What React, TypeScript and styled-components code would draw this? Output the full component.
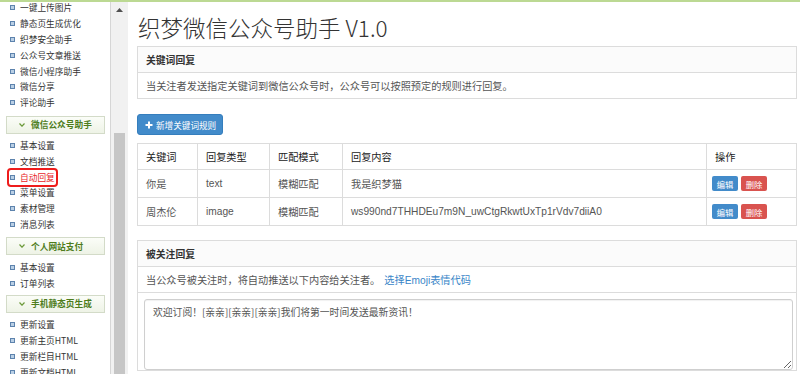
import React from "react";
import styled, { createGlobalStyle, css } from "styled-components";

const Global = createGlobalStyle`
  html, body { margin: 0; padding: 0; background: #fff; overflow: hidden; }
  body { font-family: "Liberation Sans", "Noto Sans CJK SC", sans-serif; color: #333; }
  * { box-sizing: border-box; }
`;

const Page = styled.div`
  width: 800px;
  height: 374px;
  display: flex;
  flex-direction: column;
  overflow: hidden;
`;

const TopBar = styled.div`
  height: 2px;
  flex: none;
  background: #bcd993;
`;

const Body = styled.div`
  flex: 1;
  min-height: 0;
  display: flex;
`;

const Sidebar = styled.nav`
  width: 111px;
  flex: none;
  border-right: 1px solid #d6d6d6;
  overflow: hidden;
  font-family: "Noto Sans CJK SC", sans-serif;
  font-size: 8.7px;
`;

const SideInner = styled.div`
  margin-top: -2px;
`;

const List = styled.ul`
  list-style: none;
  margin: 0;
  padding: 0;
`;

const Item = styled.li`
  height: 15.8px;
  display: flex;
  align-items: center;
  padding-left: 10px;
`;

const ItemLabel = styled.span<{ $active?: boolean }>`
  display: inline-flex;
  align-items: center;
  gap: 5px;
  color: #333;
  ${(p) =>
    p.$active &&
    css`
      color: #e8262a;
      outline: 2px solid #ee1c1c;
      outline-offset: 1px;
      border-radius: 1px;
    `}
`;

const Bullet = styled.i`
  width: 5px;
  height: 5px;
  border: 1px solid #5d83ad;
  background: #b9cfe5;
  display: block;
`;

const SectionHead = styled.div<{ $top: number; $bottom: number }>`
  margin: ${(p) => p.$top}px 5px ${(p) => p.$bottom}px 6px;
  height: 18px;
  border: 1px solid #d3dbc8;
  background: linear-gradient(#fbfdf8, #eef3e6);
  display: flex;
  align-items: center;
  gap: 6px;
  padding-left: 12px;
  color: #4e7d1c;
  font-weight: 700;
  font-size: 8.7px;
`;

const ScrollBar = styled.div`
  width: 17px;
  flex: none;
  background: #f1f1f1;
  display: flex;
  flex-direction: column;
  align-items: center;
`;

const ScrollArrow = styled.div`
  height: 15px;
  display: flex;
  align-items: center;
  justify-content: center;
`;

const ScrollTrack = styled.div`
  flex: 1;
  width: 100%;
  padding: 116px 3px 0 3px;
  display: flex;
`;

const Thumb = styled.div`
  flex: 1;
  background: #c6c6c6;
`;

const Main = styled.main`
  flex: 1;
  min-width: 0;
  padding: 0 3px 0 9px;
  overflow: hidden;
  font-size: 10.2px;
`;

const Title = styled.h1`
  margin: 10px 0 4px 1px;
  font-family: "Noto Sans CJK SC", sans-serif;
  font-weight: 300;
  font-size: 22.5px;
  line-height: 30px;
  color: #333;
`;

const Panel = styled.section`
  border: 1px solid #dcdcdc;
  background: #fff;
`;

const PanelHead = styled.div`
  height: 26px;
  padding: 0 8px;
  display: flex;
  align-items: center;
  background: #fbfbfb;
  border-bottom: 1px solid #dcdcdc;
  font-weight: 700;
  color: #333;
  font-family: "Noto Sans CJK SC", sans-serif;
  font-size: 9.8px;
`;

const PanelRow = styled.div<{ $h: number; $line?: boolean }>`
  height: ${(p) => p.$h}px;
  padding: 0 8px;
  display: flex;
  align-items: center;
  gap: 4px;
  color: #555;
  ${(p) => p.$line && "border-bottom: 1px solid #dcdcdc;"}
`;

const Link = styled.a`
  color: #3a86c8;
  text-decoration: none;
`;

const PrimaryButton = styled.button`
  margin-top: 15px;
  height: 21px;
  width: 86px;
  border: 1px solid #357ebd;
  border-radius: 3px;
  background: #428bca;
  color: #fff;
  font-family: "Noto Sans CJK SC", sans-serif;
  font-size: 8.6px;
  display: flex;
  align-items: center;
  gap: 3px;
  padding: 0 0 0 7px;
`;

const Table = styled.table`
  margin-top: 8px;
  width: 100%;
  border-collapse: collapse;
  table-layout: fixed;
  border: 1px solid #dcdcdc;
`;

const Th = styled.th<{ $w?: number }>`
  ${(p) => p.$w && `width: ${p.$w}px;`}
  height: 26px;
  border: 1px solid #dcdcdc;
  text-align: left;
  font-weight: 400;
  color: #222;
  padding: 0 8px;
`;

const Td = styled.td`
  height: 28px;
  border: 1px solid #dcdcdc;
  padding: 0 8px;
  color: #555;
  white-space: nowrap;
`;

const Ops = styled.div`
  display: flex;
  gap: 3px;
  margin-left: -3px;
`;

const SmallBtn = styled.button<{ $danger?: boolean }>`
  width: 26px;
  height: 15px;
  border: none;
  border-radius: 2px;
  padding: 0;
  color: #fff;
  font-family: "Noto Sans CJK SC", sans-serif;
  font-size: 8.3px;
  background: ${(p) => (p.$danger ? "#d9534f" : "#428bca")};
`;

const Panel2 = styled(Panel)`
  margin-top: 14px;
`;

const TextWrap = styled.div`
  padding: 6px 3px 0 6px;
`;

const Area = styled.textarea`
  display: block;
  width: 100%;
  height: 71px;
  border: 1px solid #cfcfcf;
  border-radius: 3px;
  padding: 6px 8px;
  font-family: "Noto Sans CJK SC", sans-serif;
  font-size: 9.8px;
  line-height: 13px;
  color: #555;
  box-shadow: inset 0 1px 1px rgba(0, 0, 0, 0.06);
`;

const Arrow = () => (
  <svg width="6" height="4" viewBox="0 0 6 4">
    <path d="M0.5 0.5 L3 3.2 L5.5 0.5" fill="none" stroke="#6c9a3a" strokeWidth="1.2" />
  </svg>
);

type Sec = { title?: string; items: string[]; top?: number; bottom?: number };

const sections: Sec[] = [
  { items: ["一键上传图片", "静态页生成优化", "织梦安全助手", "公众号文章推送", "微信小程序助手", "微信分享", "评论助手"] },
  { title: "微信公众号助手", top: 5, bottom: 4, items: ["基本设置", "文档推送", "自动回复", "菜单设置", "素材管理", "消息列表"] },
  { title: "个人网站支付", top: 5, bottom: 4, items: ["基本设置", "订单列表"] },
  { title: "手机静态页生成", top: 4, bottom: 4, items: ["更新设置", "更新主页HTML", "更新栏目HTML", "更新文档HTML"] },
];

const rows = [
  { k: "你是", t: "text", m: "模糊匹配", c: "我是织梦猫" },
  { k: "周杰伦", t: "image", m: "模糊匹配", c: "ws990nd7THHDEu7m9N_uwCtgRkwtUxTp1rVdv7diiA0" },
];

export default function App() {
  return (
    <Page>
      <Global />
      <TopBar />
      <Body>
        <Sidebar>
          <SideInner>
            {sections.map((s, i) => (
              <React.Fragment key={i}>
                {s.title && (
                  <SectionHead $top={s.top ?? 5} $bottom={s.bottom ?? 4}>
                    <Arrow />
                    {s.title}
                  </SectionHead>
                )}
                <List>
                  {s.items.map((it) => (
                    <Item key={it}>
                      <ItemLabel $active={it === "自动回复"}>
                        <Bullet />
                        {it}
                      </ItemLabel>
                    </Item>
                  ))}
                </List>
              </React.Fragment>
            ))}
          </SideInner>
        </Sidebar>
        <ScrollBar>
          <ScrollArrow>
            <svg width="7" height="4" viewBox="0 0 7 4">
              <path d="M0 4 L3.5 0 L7 4 Z" fill="#505050" />
            </svg>
          </ScrollArrow>
          <ScrollTrack>
            <Thumb />
          </ScrollTrack>
        </ScrollBar>
        <Main>
          <Title>织梦微信公众号助手 V1.0</Title>
          <Panel>
            <PanelHead>关键词回复</PanelHead>
            <PanelRow $h={25}>当关注者发送指定关键词到微信公众号时，公众号可以按照预定的规则进行回复。</PanelRow>
          </Panel>
          <PrimaryButton>
            <svg width="8" height="8" viewBox="0 0 8 8">
              <path d="M4 0.5 V7.5 M0.5 4 H7.5" stroke="#fff" strokeWidth="2" />
            </svg>
            新增关键词规则
          </PrimaryButton>
          <Table>
            <thead>
              <tr>
                <Th $w={60}>关键词</Th>
                <Th $w={72}>回复类型</Th>
                <Th $w={73}>匹配模式</Th>
                <Th $w={364}>回复内容</Th>
                <Th>操作</Th>
              </tr>
            </thead>
            <tbody>
              {rows.map((r) => (
                <tr key={r.k}>
                  <Td>{r.k}</Td>
                  <Td>{r.t}</Td>
                  <Td>{r.m}</Td>
                  <Td>{r.c}</Td>
                  <Td>
                    <Ops>
                      <SmallBtn>编辑</SmallBtn>
                      <SmallBtn $danger>删除</SmallBtn>
                    </Ops>
                  </Td>
                </tr>
              ))}
            </tbody>
          </Table>
          <Panel2>
            <PanelHead>被关注回复</PanelHead>
            <PanelRow $h={26} $line>
              当公众号被关注时，将自动推送以下内容给关注者。
              <Link href="#">选择Emoji表情代码</Link>
            </PanelRow>
            <TextWrap>
              <Area defaultValue="欢迎订阅！[亲亲][亲亲][亲亲]我们将第一时间发送最新资讯！" />
            </TextWrap>
          </Panel2>
        </Main>
      </Body>
    </Page>
  );
}
